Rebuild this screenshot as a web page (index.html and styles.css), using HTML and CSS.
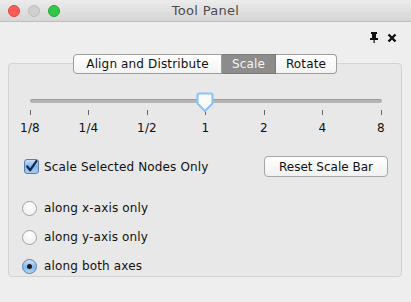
FILE: index.html
```html
<!DOCTYPE html>
<html lang="en">
<head>
 <meta charset="UTF-8">
 <title>Tool Panel</title>
 <link rel="stylesheet" href="styles.css">
</head>
<body>
 <div class="window">
  <div class="titlebar">
   <div class="lights">
    <span class="light light_close"></span>
    <span class="light light_min"></span>
    <span class="light light_max"></span>
   </div>
   <div class="title">Tool Panel</div>
  </div>

  <div class="toolbar">
   <svg class="tool_icon" width="10" height="11" viewBox="0 0 10 11">
    <rect x="2" y="0" width="6" height="2" fill="#111"/>
    <rect x="3" y="2" width="4" height="4" fill="#111"/>
    <rect x="1" y="6" width="8" height="2" fill="#111"/>
    <rect x="4.5" y="8" width="1.2" height="3" fill="#111"/>
   </svg>
   <svg class="tool_icon" width="10" height="10" viewBox="0 0 10 10">
    <path d="M1.5 1.5 L8.5 8.5 M8.5 1.5 L1.5 8.5" stroke="#111" stroke-width="2.4"/>
   </svg>
  </div>

  <div class="panel">
   <div class="tabs">
    <a href="javascript:void(0)" class="tab tab_align">Align and Distribute</a>
    <a href="javascript:void(0)" class="tab tab_scale active">Scale</a>
    <a href="javascript:void(0)" class="tab tab_rotate">Rotate</a>
   </div>

   <div class="box">
    <div class="slider">
     <div class="track"></div>
     <svg class="thumb" width="18" height="21" viewBox="0 0 18 21">
      <path d="M3 1.5 H15 Q16.5 1.5 16.5 3 V11.5 L9 19 L1.5 11.5 V3 Q1.5 1.5 3 1.5 Z" fill="#fbfbfb" stroke="#8cc4f4" stroke-width="2.2" stroke-linejoin="round"/>
     </svg>
     <div class="ticks">
      <div class="tick"><span class="mark"></span><span>1/8</span></div>
      <div class="tick"><span class="mark"></span><span>1/4</span></div>
      <div class="tick"><span class="mark"></span><span>1/2</span></div>
      <div class="tick"><span class="mark"></span><span>1</span></div>
      <div class="tick"><span class="mark"></span><span>2</span></div>
      <div class="tick"><span class="mark"></span><span>4</span></div>
      <div class="tick"><span class="mark"></span><span>8</span></div>
     </div>
    </div>

    <div class="option_row">
     <label class="check">
      <svg width="15" height="15" viewBox="0 0 15 15">
       <defs>
        <linearGradient id="cbg" x1="0" y1="0" x2="0" y2="1">
         <stop offset="0" stop-color="#cfe4fb"/>
         <stop offset="0.5" stop-color="#7fb5ee"/>
         <stop offset="1" stop-color="#a9d0f7"/>
        </linearGradient>
       </defs>
       <rect x="0.5" y="0.5" width="14" height="14" rx="2.5" fill="url(#cbg)" stroke="#5a7fa8"/>
       <path d="M3.2 7.4 L6.2 11.2 L12.4 2.2" fill="none" stroke="#162a44" stroke-width="2.3" stroke-linecap="round" stroke-linejoin="round"/>
      </svg>
      <span>Scale Selected Nodes Only</span>
     </label>
     <button class="btn">Reset Scale Bar</button>
    </div>

    <div class="radios">
     <label class="radio"><span class="dot"></span>along x-axis only</label>
     <label class="radio"><span class="dot"></span>along y-axis only</label>
     <label class="radio"><span class="dot on"></span>along both axes</label>
    </div>
   </div>
  </div>
 </div>
</body>
</html>
```

FILE: styles.css
```css
html, body { margin: 0; padding: 0; }
body { background: #eeeeee; font-family: "DejaVu Sans", sans-serif; font-size: 12px; letter-spacing: 0.15px; color: #111; }
.window { width: 411px; height: 302px; overflow: hidden; }

.titlebar { height: 21px; border-bottom: 1px solid #bebebe; background: linear-gradient(#ebebeb, #d6d6d6); display: flex; align-items: center; position: relative; }
.lights { display: flex; gap: 8px; padding-left: 8px; }
.light { width: 12px; height: 12px; border-radius: 50%; box-sizing: border-box; }
.light_close { background: #fc5b57; border: 1px solid #e0443e; }
.light_min { background: #d0d0d0; border: 1px solid #bcbcbc; }
.light_max { background: #33c748; border: 1px solid #27a737; }
.title { position: absolute; left: 0; right: 0; text-align: center; font-size: 13px; letter-spacing: 0.3px; color: #4c4c4c; }

.toolbar { display: flex; justify-content: flex-end; align-items: center; gap: 8px; height: 31px; padding-right: 14px; }
.tool_icon { display: block; }

.panel { padding: 1px 9px 0 8px; }
.tabs { display: flex; justify-content: center; position: relative; z-index: 1; }
.tab { display: block; box-sizing: border-box; height: 20px; line-height: 18px; text-align: center; border: 1px solid #9d9d9d; border-left: none; background: linear-gradient(#ffffff, #f3f3f3); color: #111; text-decoration: none; }
.tab:first-child { border-left: 1px solid #9d9d9d; border-radius: 4px 0 0 4px; }
.tab:last-child { border-radius: 0 4px 4px 0; }
.tab_align { width: 149px; }
.tab_scale { width: 54px; }
.tab_rotate { width: 61px; }
.tab.active { background: #8c8c8c; color: #f4f4f4; border-color: #7b7b7b; }

.box { margin-top: -11px; height: 212px; border: 1px solid #d2d2d2; border-radius: 4px; background: #e8e8e8; }

.slider { position: relative; margin: 35px 5px 0 6px; }
.track { height: 4px; margin: 0 14px 0 15px; border-radius: 2px; background: #b4b4b4; border-top: 1px solid #9c9c9c; box-sizing: border-box; }
.thumb { position: absolute; top: -7px; left: 181px; }
.ticks { display: flex; justify-content: space-between; margin-top: 7px; }
.tick { width: 30px; display: flex; flex-direction: column; align-items: center; }
.mark { width: 1px; height: 5px; background: #666; margin-bottom: 6px; }

.option_row { display: flex; justify-content: space-between; align-items: center; margin-top: 21px; padding: 0 13px 0 15px; }
.check { display: flex; align-items: center; gap: 5px; }
.check svg { display: block; }
.btn { font: inherit; font-size: 12px; color: #111; width: 124px; height: 21px; border: 1px solid #a6a6a6; border-radius: 4px; background: linear-gradient(#ffffff, #f1f1f1); padding: 0; }

.radios { display: flex; flex-direction: column; gap: 9px; margin-top: 21px; padding-left: 13px; }
.radio { display: flex; align-items: center; gap: 7px; height: 20px; }
.dot { width: 15px; height: 15px; box-sizing: border-box; border-radius: 50%; border: 1px solid #a3a3a3; background: radial-gradient(circle at 50% 30%, #ffffff, #ececec); display: flex; align-items: center; justify-content: center; }
.dot.on { border-color: #5a7fa8; background: linear-gradient(#cfe4fb, #80b6ee 55%, #b3d6f8); }
.dot.on::after { content: ""; width: 5px; height: 5px; border-radius: 50%; background: #1a1a1a; }
```
